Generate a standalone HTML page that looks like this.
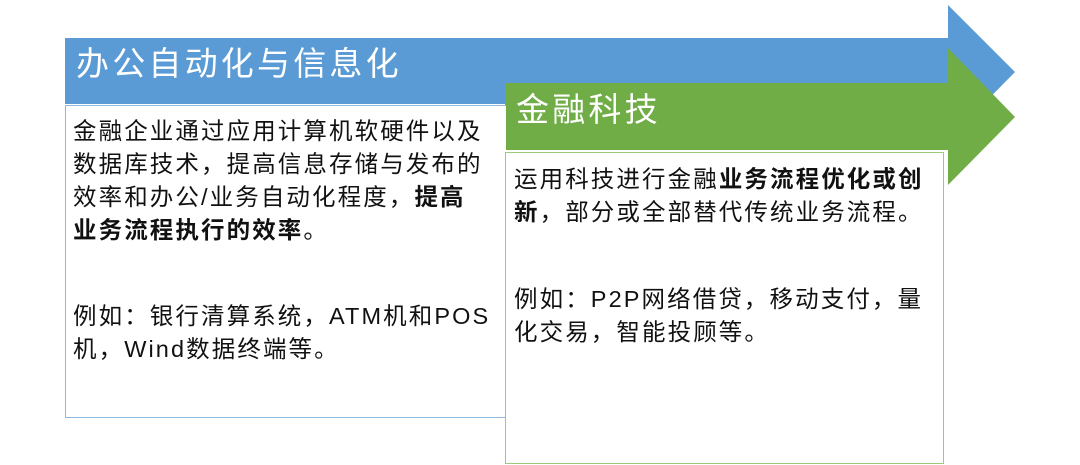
<!DOCTYPE html>
<html><head><meta charset="utf-8"><style>
body{margin:0;width:1080px;height:465px;background:#fff;position:relative;overflow:hidden;font-family:"Liberation Sans","Noto Sans CJK SC",sans-serif;}
.a{position:absolute;}
.t{position:absolute;color:#fff;font-size:33px;line-height:40px;letter-spacing:3.2px;white-space:nowrap;}
.box{position:absolute;box-sizing:border-box;background:#fff;}
.tx{position:absolute;font-size:23.5px;line-height:33px;color:#111;letter-spacing:2.1px;white-space:nowrap;}
b{font-weight:bold;}
</style></head><body>
<svg class="a" style="left:0;top:0" width="1080" height="465">
<polygon points="65,38 948,38 948,5 1015,72 948,140 948,104 65,104" fill="#5b9bd5"/>
<polygon points="505,83 948,83 948,48 1015,117 948,185 948,150 505,150" fill="#70ad47"/>
</svg>
<div class="t" style="left:76px;top:44px">办公自动化与信息化</div>
<div class="t" style="left:516px;top:90px">金融科技</div>
<div class="box" style="left:65px;top:105px;width:441px;height:313px;border:1px solid #8db8e0;border-right:none;"></div>
<div class="box" style="left:505px;top:152px;width:439px;height:312px;border:1px solid #9cc97e;"></div>
<div class="tx" style="left:73px;top:115px">金融企业通过应用计算机软硬件以及<br>数据库技术，提高信息存储与发布的<br>效率和办公/业务自动化程度，<b>提高</b><br><b>业务流程执行的效率</b>。</div>
<div class="tx" style="left:73px;top:300px">例如：银行清算系统，ATM机和POS<br>机，Wind数据终端等。</div>
<div class="tx" style="left:514px;top:163px">运用科技进行金融<b>业务流程优化或创</b><br><b>新</b>，部分或全部替代传统业务流程。</div>
<div class="tx" style="left:514px;top:283px">例如：P2P网络借贷，移动支付，量<br>化交易，智能投顾等。</div>
</body></html>
